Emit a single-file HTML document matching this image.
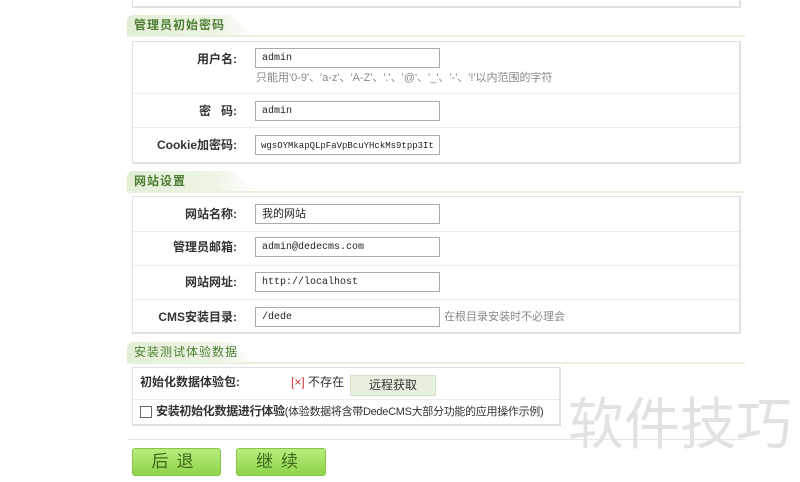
<!DOCTYPE html>
<html><head><meta charset="utf-8"><style>
body{margin:0;width:800px;height:482px;background:#fff;position:relative;overflow:hidden;font-family:"Liberation Sans","Noto Sans CJK SC",sans-serif;font-size:12px;color:#333;line-height:14px}
.a{position:absolute}
.box{position:absolute;border:2px solid #e2e2e2;border-width:1px 2px 2px 1px;background:#fff;box-sizing:border-box}
.hd{position:absolute;left:127px;width:618px;height:20px;border-bottom:2px solid #e9f1df}
.hd .tab{position:absolute;left:0;top:0;width:128px;height:20px;background:linear-gradient(90deg,#e2eed4,#eef5e6 70%,#fff);border-radius:6px 0 0 0;clip-path:polygon(0 0,103px 0,128px 100%,0 100%)}
.hd span{position:absolute;left:7px;top:3px;font-weight:bold;color:#4d7d33;letter-spacing:1px;font-size:12px;line-height:14px}
.sep{position:absolute;left:0;right:0;height:1px;background:#ececec}
.lab{position:absolute;width:105px;text-align:right;font-weight:bold;color:#333;font-size:12px;line-height:14px}
.in{position:absolute;left:255px;width:185px;height:20px;border:1px solid #aaa;box-sizing:border-box;font-family:"Liberation Mono",monospace;font-size:10px;line-height:12px;padding:4px 0 0 6px;color:#222}
.btn{position:absolute;top:448px;height:28px;border:1px solid #8bc34a;border-radius:3px;background:linear-gradient(#b6ec7c,#8ed44a);color:#3d6a1c;font-size:17px;text-align:center;line-height:26px;letter-spacing:8px;box-sizing:border-box}
.gray{color:#888}
</style></head><body>
<div class="box" style="left:132px;top:-5px;width:609px;height:13px"></div>

<div class="hd" style="top:15px"><div class="tab"></div><span>管理员初始密码</span></div>
<div class="box" style="left:132px;top:41px;width:609px;height:123px">
 <div class="sep" style="top:51px"></div><div class="sep" style="top:85px"></div>
</div>
<div class="lab" style="left:132px;top:52px">用户名:</div>
<div class="in" style="top:48px">admin</div>
<div class="a gray" style="left:256px;top:71px;font-size:11px">只能用'0-9'、'a-z'、'A-Z'、'.'、'@'、'_'、'-'、'!'以内范围的字符</div>
<div class="lab" style="left:132px;top:104px">密&nbsp;&nbsp;&nbsp;码:</div>
<div class="in" style="top:101px">admin</div>
<div class="lab" style="left:132px;top:138px">Cookie加密码:</div>
<div class="in" style="top:135px;font-size:9px;padding-left:5px">wgsOYMkapQLpFaVpBcuYHckMs9tpp3It</div>

<div class="hd" style="top:171px"><div class="tab"></div><span>网站设置</span></div>
<div class="box" style="left:132px;top:196px;width:609px;height:138px">
 <div class="sep" style="top:34px"></div><div class="sep" style="top:68px"></div><div class="sep" style="top:102px"></div>
</div>
<div class="lab" style="left:132px;top:207px">网站名称:</div>
<div class="in" style="top:204px;font-family:'Liberation Sans','Noto Sans CJK SC',sans-serif;font-size:11px;padding-top:3px;line-height:13px">我的网站</div>
<div class="lab" style="left:132px;top:240px">管理员邮箱:</div>
<div class="in" style="top:237px">admin@dedecms.com</div>
<div class="lab" style="left:132px;top:275px">网站网址:</div>
<div class="in" style="top:272px">http://localhost</div>
<div class="lab" style="left:132px;top:310px">CMS安装目录:</div>
<div class="in" style="top:307px">/dede</div>
<div class="a gray" style="left:444px;top:310px;font-size:11px">在根目录安装时不必理会</div>

<div class="hd" style="top:342px"><div class="tab"></div><span style="font-weight:normal;color:#4d7d33">安装测试体验数据</span></div>
<div class="box" style="left:132px;top:367px;width:429px;height:59px">
 <div class="sep" style="top:31px"></div>
</div>
<div class="a" style="left:140px;top:375px;font-weight:bold">初始化数据体验包:</div>
<div class="a" style="left:291px;top:375px"><span style="color:#c33">[×]</span> 不存在</div>
<div class="a" style="left:350px;top:375px;width:84px;height:19px;background:#e8f0e0;border:1px solid #d8e0d0;text-align:center;line-height:19px">远程获取</div>
<div class="a" style="left:140px;top:406px;width:10px;height:10px;border:1px solid #666"></div>
<div class="a" style="left:156px;top:404px;letter-spacing:-0.3px"><b>安装初始化数据进行体验</b><span style="font-size:11px">(体验数据将含带DedeCMS大部分功能的应用操作示例)</span></div>
<div class="a" style="left:127px;top:439px;width:618px;height:1px;background:#e6e6e6"></div>

<div class="btn" style="left:132px;width:89px">后退</div>
<div class="btn" style="left:236px;width:90px">继续</div>

<div class="a" style="left:568px;top:386px;font-size:56px;color:#e2e2e2;font-family:'Noto Sans CJK SC',sans-serif;line-height:70px">软件技巧</div>
</body></html>
